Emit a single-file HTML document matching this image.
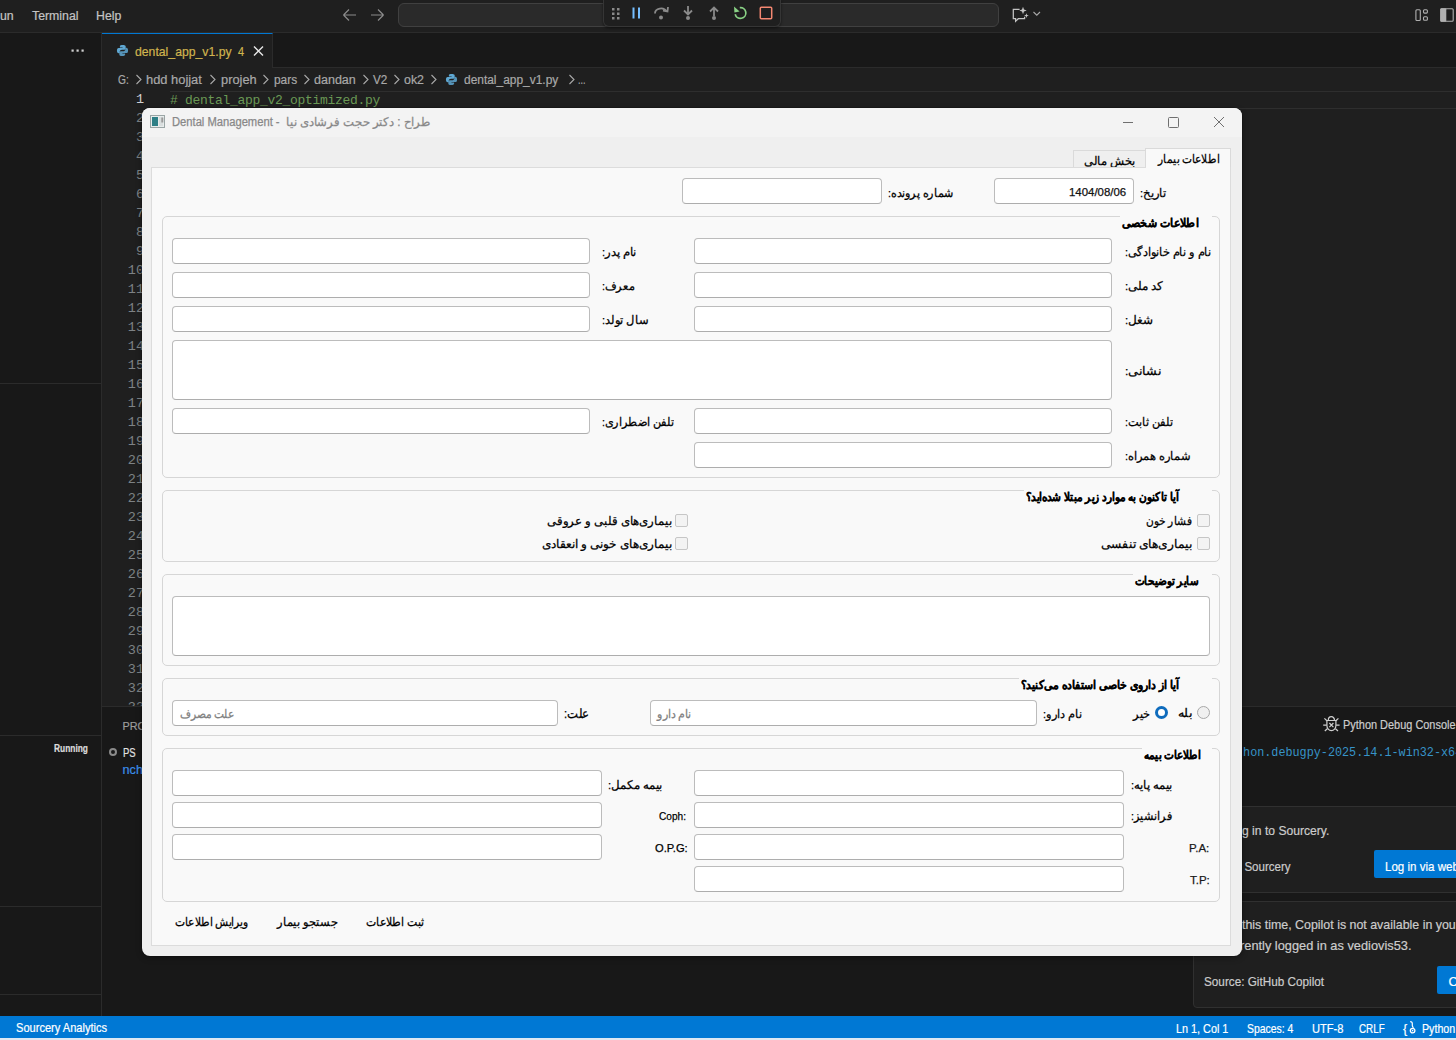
<!DOCTYPE html>
<html><head><meta charset="utf-8">
<style>
*{box-sizing:border-box;margin:0;padding:0}
html,body{width:1456px;height:1040px;overflow:hidden;background:#1f1f1f;font-family:"Liberation Sans",sans-serif}
.a{position:absolute}
.t{position:absolute;white-space:nowrap;line-height:1}
.ln{position:absolute;left:104px;width:40px;text-align:right;font-family:"Liberation Mono",monospace;font-size:13.5px;color:#6e7681;line-height:19px}
</style></head>
<body>
<div class="a" style="left:0px;top:0px;width:1456px;height:33px;background:#1f1f1f;border-bottom:1px solid #2b2b2b"></div>
<div id="V0" class="t" style="left:0px;top:9.34px;font-size:12.3px;line-height:14px;color:#c4c4c4;-webkit-text-stroke:0.2px #c4c4c4;transform-origin:0 50%;transform:scaleX(1.0000);">un</div>
<div id="V1" class="t" style="left:32px;top:9.34px;font-size:12.3px;line-height:14px;color:#c4c4c4;-webkit-text-stroke:0.2px #c4c4c4;transform-origin:0 50%;transform:scaleX(1.0000);">Terminal</div>
<div id="V2" class="t" style="left:96px;top:9.34px;font-size:12.3px;line-height:14px;color:#c4c4c4;-webkit-text-stroke:0.2px #c4c4c4;transform-origin:0 50%;transform:scaleX(1.0000);">Help</div>
<svg class="a" style="left:342px;top:7px" width="44" height="16" viewBox="0 0 44 16"><path d="M1.5 8H14M1.5 8L7 2.5M1.5 8L7 13.5" stroke="#8b8b8b" stroke-width="1.2" fill="none"/><path d="M41.5 8H29M41.5 8L36 2.5M41.5 8L36 13.5" stroke="#8b8b8b" stroke-width="1.2" fill="none"/></svg>
<div class="a" style="left:398px;top:3px;width:601px;height:24px;background:#2a2a2a;border:1px solid #404040;border-radius:6px"></div>
<div class="a" style="left:603px;top:0px;width:178px;height:27px;background:#1f1f1f;border:1px solid #353535;border-top:none;border-radius:0 0 6px 6px;box-shadow:0 1px 3px rgba(0,0,0,.5)"></div>
<svg class="a" style="left:603px;top:0px" width="178" height="27" viewBox="0 0 178 27">
 <g fill="#8a8a8a"><rect x="9" y="8" width="2.5" height="2.5"/><rect x="14" y="8" width="2.5" height="2.5"/><rect x="9" y="12.5" width="2.5" height="2.5"/><rect x="14" y="12.5" width="2.5" height="2.5"/><rect x="9" y="17" width="2.5" height="2.5"/><rect x="14" y="17" width="2.5" height="2.5"/></g>
 <g fill="#75beff"><rect x="29.5" y="7.5" width="2" height="11"/><rect x="35" y="7.5" width="2" height="11"/></g>
 <path d="M52 13.5 a6 5 0 0 1 11.5 -2" stroke="#8a8a8a" stroke-width="1.8" fill="none"/><path d="M60 10.5 L64.5 11.5 L65 7" stroke="#8a8a8a" stroke-width="1.8" fill="none"/><circle cx="58" cy="17.5" r="2" fill="#8a8a8a"/>
 <path d="M85 6V14M81 10.5L85 14.5L89 10.5" stroke="#8a8a8a" stroke-width="1.8" fill="none"/><circle cx="85" cy="18" r="2" fill="#8a8a8a"/>
 <path d="M111 16V8M107 11.5L111 7.5L115 11.5" stroke="#8a8a8a" stroke-width="1.8" fill="none"/><circle cx="111" cy="18" r="2" fill="#8a8a8a"/>
 <path d="M136.8 7.6 A5.4 5.4 0 1 1 132.2 14.2" stroke="#89d185" stroke-width="1.7" fill="none"/><path d="M131 6.6 L131.4 12.4 L136.6 11.6 Z" fill="#89d185"/>
 <rect x="157.3" y="7.3" width="11.4" height="11.4" rx="1" stroke="#f48771" stroke-width="1.5" fill="none"/>
</svg>
<svg class="a" style="left:1011px;top:6px" width="32" height="18" viewBox="0 0 32 18"><path d="M8.6 3.3H2.3V12.7H4.6V15.2L7.3 12.7H13.6V10.8" stroke="#c4c4c4" stroke-width="1.25" fill="none"/><path d="M12 0.8 L13 3.5 L15.7 4.5 L13 5.5 L12 8.2 L11 5.5 L8.3 4.5 L11 3.5Z" fill="#c4c4c4"/><path d="M15.4 7.2 L16 9 L17.8 9.6 L16 10.2 L15.4 12 L14.8 10.2 L13 9.6 L14.8 9Z" fill="#c4c4c4"/><path d="M22.5 6L25.8 9.2L29 6" stroke="#a8a8a8" stroke-width="1.1" fill="none"/></svg>
<svg class="a" style="left:1412px;top:6px" width="44" height="18" viewBox="0 0 44 18"><g stroke="#b0b0b0" stroke-width="1.1" fill="none"><rect x="3.9" y="3.7" width="4.4" height="10.8" rx="1"/><rect x="11.5" y="3.7" width="3.9" height="3.4" rx="1"/><rect x="11.5" y="10.8" width="3.9" height="3.5" rx="1"/><rect x="28.8" y="2.7" width="12.4" height="12.6" rx="1"/></g><rect x="28.3" y="2.2" width="6" height="13.6" rx="1" fill="#b0b0b0"/></svg>
<div class="a" style="left:0px;top:33px;width:102px;height:983px;background:#181818;border-right:1px solid #2b2b2b"></div>
<div class="a" style="left:0px;top:383px;width:101px;height:1px;background:#2b2b2b"></div>
<div class="a" style="left:0px;top:735px;width:101px;height:1px;background:#2b2b2b"></div>
<div class="a" style="left:0px;top:906px;width:101px;height:1px;background:#2b2b2b"></div>
<div class="a" style="left:0px;top:994px;width:101px;height:1px;background:#2b2b2b"></div>
<svg class="a" style="left:70px;top:48px" width="16" height="6"><rect x="1.5" y="1.5" width="2.2" height="2.2" fill="#d0d0d0"/><rect x="6.5" y="1.5" width="2.2" height="2.2" fill="#d0d0d0"/><rect x="11.5" y="1.5" width="2.2" height="2.2" fill="#d0d0d0"/></svg>
<div id="V3" class="t" style="left:54px;top:741.19px;font-size:11px;line-height:14px;color:#dcdcdc;-webkit-text-stroke:0.2px #dcdcdc;font-weight:bold;transform-origin:0 50%;transform:scaleX(0.7609);">Running</div>
<div class="a" style="left:102px;top:33px;width:1354px;height:35px;background:#181818;border-bottom:1px solid #2b2b2b"></div>
<div class="a" style="left:102px;top:33px;width:171px;height:35px;background:#1f1f1f;border-top:1px solid #0078d4;border-right:1px solid #2b2b2b"></div>
<svg class="a" style="left:116px;top:44px" width="13" height="13" viewBox="0 0 14 14"><path d="M7 1C4 1 4.2 2.3 4.2 2.3V3.7H7.1V4.2H3C1.5 4.2 1 5.5 1 7.1S1.6 10 3 10H4V8.4C4 7 5.2 6.1 6.4 6.1H9C10.1 6.1 10.4 5.3 10.4 4.4V2.5C10.4 1.6 9.5 1 7 1Z" fill="#5fa8d3"/><path d="M7 13C10 13 9.8 11.7 9.8 11.7V10.3H6.9V9.8H11C12.5 9.8 13 8.5 13 6.9S12.4 4 11 4H10V5.6C10 7 8.8 7.9 7.6 7.9H5C3.9 7.9 3.6 8.7 3.6 9.6V11.5C3.6 12.4 4.5 13 7 13Z" fill="#5fa8d3" opacity=".85"/></svg>
<div id="V4" class="t" style="left:135px;top:45.16px;font-size:12.8px;line-height:14px;color:#d0b44e;-webkit-text-stroke:0.2px #d0b44e;transform-origin:0 50%;transform:scaleX(0.9559);">dental_app_v1.py</div>
<div id="V5" class="t" style="left:238px;top:45.16px;font-size:12.8px;line-height:14px;color:#d0b44e;-webkit-text-stroke:0.2px #d0b44e;transform-origin:0 50%;transform:scaleX(0.8571);">4</div>
<svg class="a" style="left:253px;top:46px" width="11" height="10" viewBox="0 0 11 10"><path d="M1 0.5L10 9.5M10 0.5L1 9.5" stroke="#e8e8e8" stroke-width="1.4"/></svg>
<div class="a" style="left:102px;top:68px;width:1354px;height:638px;background:#1f1f1f"></div>
<div id="V6" class="t" style="left:118px;top:73.27px;font-size:12.5px;line-height:14px;color:#a9a9a9;-webkit-text-stroke:0.2px #a9a9a9;transform-origin:0 50%;transform:scaleX(0.8143);">G:</div>
<div id="V7" class="t" style="left:146.2px;top:73.27px;font-size:12.5px;line-height:14px;color:#a9a9a9;-webkit-text-stroke:0.2px #a9a9a9;transform-origin:0 50%;transform:scaleX(1.0304);">hdd hojjat</div>
<div id="V8" class="t" style="left:220.7px;top:73.27px;font-size:12.5px;line-height:14px;color:#a9a9a9;-webkit-text-stroke:0.2px #a9a9a9;transform-origin:0 50%;transform:scaleX(1.0257);">projeh</div>
<div id="V9" class="t" style="left:274px;top:73.27px;font-size:12.5px;line-height:14px;color:#a9a9a9;-webkit-text-stroke:0.2px #a9a9a9;transform-origin:0 50%;transform:scaleX(0.9520);">pars</div>
<div id="V10" class="t" style="left:314.3px;top:73.27px;font-size:12.5px;line-height:14px;color:#a9a9a9;-webkit-text-stroke:0.2px #a9a9a9;transform-origin:0 50%;transform:scaleX(1.0024);">dandan</div>
<div id="V11" class="t" style="left:373px;top:73.27px;font-size:12.5px;line-height:14px;color:#a9a9a9;-webkit-text-stroke:0.2px #a9a9a9;transform-origin:0 50%;transform:scaleX(0.9375);">V2</div>
<div id="V12" class="t" style="left:404px;top:73.27px;font-size:12.5px;line-height:14px;color:#a9a9a9;-webkit-text-stroke:0.2px #a9a9a9;transform-origin:0 50%;transform:scaleX(0.9905);">ok2</div>
<div id="V13" class="t" style="left:464px;top:73.27px;font-size:12.5px;line-height:14px;color:#a9a9a9;-webkit-text-stroke:0.2px #a9a9a9;transform-origin:0 50%;transform:scaleX(0.9549);">dental_app_v1.py</div>
<div id="V14" class="t" style="left:578.4px;top:73.27px;font-size:12.5px;line-height:14px;color:#a9a9a9;-webkit-text-stroke:0.2px #a9a9a9;transform-origin:0 50%;transform:scaleX(0.7167);">...</div>
<svg class="a" style="left:134.5px;top:74px" width="8" height="11" viewBox="0 0 8 11"><path d="M1.5 1L6 5.5L1.5 10" stroke="#a9a9a9" stroke-width="1.1" fill="none"/></svg>
<svg class="a" style="left:208.7px;top:74px" width="8" height="11" viewBox="0 0 8 11"><path d="M1.5 1L6 5.5L1.5 10" stroke="#a9a9a9" stroke-width="1.1" fill="none"/></svg>
<svg class="a" style="left:262.0px;top:74px" width="8" height="11" viewBox="0 0 8 11"><path d="M1.5 1L6 5.5L1.5 10" stroke="#a9a9a9" stroke-width="1.1" fill="none"/></svg>
<svg class="a" style="left:302.6px;top:74px" width="8" height="11" viewBox="0 0 8 11"><path d="M1.5 1L6 5.5L1.5 10" stroke="#a9a9a9" stroke-width="1.1" fill="none"/></svg>
<svg class="a" style="left:362.0px;top:74px" width="8" height="11" viewBox="0 0 8 11"><path d="M1.5 1L6 5.5L1.5 10" stroke="#a9a9a9" stroke-width="1.1" fill="none"/></svg>
<svg class="a" style="left:392.6px;top:74px" width="8" height="11" viewBox="0 0 8 11"><path d="M1.5 1L6 5.5L1.5 10" stroke="#a9a9a9" stroke-width="1.1" fill="none"/></svg>
<svg class="a" style="left:430.0px;top:74px" width="8" height="11" viewBox="0 0 8 11"><path d="M1.5 1L6 5.5L1.5 10" stroke="#a9a9a9" stroke-width="1.1" fill="none"/></svg>
<svg class="a" style="left:567.6px;top:74px" width="8" height="11" viewBox="0 0 8 11"><path d="M1.5 1L6 5.5L1.5 10" stroke="#a9a9a9" stroke-width="1.1" fill="none"/></svg>
<svg class="a" style="left:445px;top:73px" width="13" height="13" viewBox="0 0 14 14"><path d="M7 1C4 1 4.2 2.3 4.2 2.3V3.7H7.1V4.2H3C1.5 4.2 1 5.5 1 7.1S1.6 10 3 10H4V8.4C4 7 5.2 6.1 6.4 6.1H9C10.1 6.1 10.4 5.3 10.4 4.4V2.5C10.4 1.6 9.5 1 7 1Z" fill="#5fa8d3"/><path d="M7 13C10 13 9.8 11.7 9.8 11.7V10.3H6.9V9.8H11C12.5 9.8 13 8.5 13 6.9S12.4 4 11 4H10V5.6C10 7 8.8 7.9 7.6 7.9H5C3.9 7.9 3.6 8.7 3.6 9.6V11.5C3.6 12.4 4.5 13 7 13Z" fill="#5fa8d3" opacity=".85"/></svg>
<div class="a" style="left:170px;top:91px;width:1286px;height:18px;border-top:1px solid #2e2e2e;border-bottom:1px solid #2e2e2e"></div>
<div class="t" style="left:170px;top:94px;font-family:'Liberation Mono',monospace;font-size:13px;letter-spacing:-0.3px;line-height:14px;color:#6a9955">#&nbsp;dental_app_v2_optimized.py</div>
<div class="ln" style="top:90.0px;color:#d0d0d0">1</div>
<div class="ln" style="top:109.0px;color:#7d8285">2</div>
<div class="ln" style="top:128.0px;color:#7d8285">3</div>
<div class="ln" style="top:147.0px;color:#7d8285">4</div>
<div class="ln" style="top:166.0px;color:#7d8285">5</div>
<div class="ln" style="top:185.0px;color:#7d8285">6</div>
<div class="ln" style="top:204.0px;color:#7d8285">7</div>
<div class="ln" style="top:223.0px;color:#7d8285">8</div>
<div class="ln" style="top:242.0px;color:#7d8285">9</div>
<div class="ln" style="top:261.0px;color:#7d8285">10</div>
<div class="ln" style="top:280.0px;color:#7d8285">11</div>
<div class="ln" style="top:299.0px;color:#7d8285">12</div>
<div class="ln" style="top:318.0px;color:#7d8285">13</div>
<div class="ln" style="top:337.0px;color:#7d8285">14</div>
<div class="ln" style="top:356.0px;color:#7d8285">15</div>
<div class="ln" style="top:375.0px;color:#7d8285">16</div>
<div class="ln" style="top:394.0px;color:#7d8285">17</div>
<div class="ln" style="top:413.0px;color:#7d8285">18</div>
<div class="ln" style="top:432.0px;color:#7d8285">19</div>
<div class="ln" style="top:451.0px;color:#7d8285">20</div>
<div class="ln" style="top:470.0px;color:#7d8285">21</div>
<div class="ln" style="top:489.0px;color:#7d8285">22</div>
<div class="ln" style="top:508.0px;color:#7d8285">23</div>
<div class="ln" style="top:527.0px;color:#7d8285">24</div>
<div class="ln" style="top:546.0px;color:#7d8285">25</div>
<div class="ln" style="top:565.0px;color:#7d8285">26</div>
<div class="ln" style="top:584.0px;color:#7d8285">27</div>
<div class="ln" style="top:603.0px;color:#7d8285">28</div>
<div class="ln" style="top:622.0px;color:#7d8285">29</div>
<div class="ln" style="top:641.0px;color:#7d8285">30</div>
<div class="ln" style="top:660.0px;color:#7d8285">31</div>
<div class="ln" style="top:679.0px;color:#7d8285">32</div>
<div class="ln" style="top:698.0px;color:#7d8285">33</div>
<div class="a" style="left:102px;top:706px;width:1354px;height:310px;background:#181818;border-top:1px solid #2b2b2b"></div>
<div id="V15" class="t" style="left:122.6px;top:718.76px;font-size:10.8px;line-height:14px;color:#9d9d9d;-webkit-text-stroke:0.2px #9d9d9d;transform-origin:0 50%;transform:scaleX(1.0000);">PROBLEMS</div>
<div class="a" style="left:108.6px;top:747.8px;width:8.2px;height:8.2px;border:2px solid #8a8a8a;border-radius:50%"></div>
<div id="V16" class="t" style="left:122.6px;top:746.26px;font-size:12.8px;line-height:14px;color:#e0e0e0;-webkit-text-stroke:0.2px #e0e0e0;transform-origin:0 50%;transform:scaleX(0.7444);-webkit-text-stroke:0.2px #e0e0e0;">PS</div>
<div id="V17" class="t" style="left:122.6px;top:763.13px;font-size:12.6px;line-height:14px;color:#3b8eea;-webkit-text-stroke:0.2px #3b8eea;transform-origin:0 50%;transform:scaleX(1.0000);">nchers</div>
<svg class="a" style="left:1322px;top:715px" width="20" height="18" viewBox="0 0 20 18"><g stroke="#d0d0d0" stroke-width="1.2" fill="none"><path d="M6.3 5.3A3.1 3.6 0 0 1 12.5 5.3"/><path d="M4.9 5.5H13.9V10.5A4.5 5.2 0 0 1 4.9 10.5Z"/><path d="M2.4 3.4L4.9 5.8M1.2 10.2H4.7M2.8 16L5.3 13.8M16.4 3.4L13.9 5.8M17.6 10.2H14.1M16 16L13.5 13.8M7.4 8L11.4 12.2M11.4 8L7.4 12.2"/></g></svg>
<div id="V18" class="t" style="left:1343px;top:718.24px;font-size:12.3px;line-height:14px;color:#cccccc;-webkit-text-stroke:0.2px #cccccc;transform-origin:0 50%;transform:scaleX(0.8898);">Python Debug Console</div>
<div id="V19" class="t" style="left:1236.1px;top:746.34px;font-size:12px;line-height:14px;color:#3794c8;font-family:'Liberation Mono',monospace;transform-origin:0 50%;transform:scaleX(0.9817);">thon.debugpy-2025.14.1-win32-x64</div>
<div class="a" style="left:1193px;top:806px;width:277px;height:87px;background:#1f1f1f;border:1px solid #303030;border-radius:4px"></div>
<div id="V20" class="t" style="left:1242px;top:823.96px;font-size:12.8px;line-height:14px;color:#cccccc;-webkit-text-stroke:0.2px #cccccc;transform-origin:0 50%;transform:scaleX(0.9474);">g in to Sourcery.</div>
<div id="V21" class="t" style="left:1238px;top:859.56px;font-size:12.8px;line-height:14px;color:#cccccc;-webkit-text-stroke:0.2px #cccccc;transform-origin:0 50%;transform:scaleX(0.9000);">: Sourcery</div>
<div class="a" style="left:1374px;top:850px;width:96px;height:28px;background:#0078d4;border-radius:2px"></div>
<div id="V22" class="t" style="left:1385px;top:859.56px;font-size:12.8px;line-height:14px;color:#ffffff;-webkit-text-stroke:0.2px #ffffff;transform-origin:0 50%;transform:scaleX(0.9036);">Log in via web</div>
<div class="a" style="left:1193px;top:901px;width:277px;height:107px;background:#1f1f1f;border:1px solid #303030;border-radius:4px"></div>
<div id="V23" class="t" style="left:1242px;top:918.16px;font-size:12.8px;line-height:14px;color:#cccccc;-webkit-text-stroke:0.2px #cccccc;transform-origin:0 50%;transform:scaleX(0.9693);">this time, Copilot is not available in you</div>
<div id="V24" class="t" style="left:1240px;top:939.26px;font-size:12.8px;line-height:14px;color:#cccccc;-webkit-text-stroke:0.2px #cccccc;transform-origin:0 50%;transform:scaleX(1.0000);">rently logged in as vediovis53.</div>
<div id="V25" class="t" style="left:1204px;top:974.76px;font-size:12.8px;line-height:14px;color:#cccccc;-webkit-text-stroke:0.2px #cccccc;transform-origin:0 50%;transform:scaleX(0.9173);">Source: GitHub Copilot</div>
<div class="a" style="left:1437px;top:966px;width:33px;height:28px;background:#0078d4;border-radius:2px"></div>
<div id="V26" class="t" style="left:1448.5px;top:974.76px;font-size:12.8px;line-height:14px;color:#ffffff;-webkit-text-stroke:0.2px #ffffff;transform-origin:0 50%;transform:scaleX(1.0000);">Cancel</div>
<div class="a" style="left:0px;top:1016px;width:1456px;height:24px;background:#0078d4;border-bottom:2px solid #dde8f3"></div>
<div id="V27" class="t" style="left:16.3px;top:1021.33px;font-size:12.6px;line-height:14px;color:#ffffff;-webkit-text-stroke:0.2px #ffffff;transform-origin:0 50%;transform:scaleX(0.8798);">Sourcery Analytics</div>
<div id="V28" class="t" style="left:1175.8px;top:1021.93px;font-size:12.6px;line-height:14px;color:#ffffff;-webkit-text-stroke:0.2px #ffffff;transform-origin:0 50%;transform:scaleX(0.8603);">Ln 1, Col 1</div>
<div id="V29" class="t" style="left:1246.7px;top:1021.93px;font-size:12.6px;line-height:14px;color:#ffffff;-webkit-text-stroke:0.2px #ffffff;transform-origin:0 50%;transform:scaleX(0.8288);">Spaces: 4</div>
<div id="V30" class="t" style="left:1311.5px;top:1021.93px;font-size:12.6px;line-height:14px;color:#ffffff;-webkit-text-stroke:0.2px #ffffff;transform-origin:0 50%;transform:scaleX(0.8833);">UTF-8</div>
<div id="V31" class="t" style="left:1359px;top:1021.93px;font-size:12.6px;line-height:14px;color:#ffffff;-webkit-text-stroke:0.2px #ffffff;transform-origin:0 50%;transform:scaleX(0.7818);">CRLF</div>
<div id="V32" class="t" style="left:1403px;top:1021.93px;font-size:12.6px;line-height:14px;color:#ffffff;-webkit-text-stroke:0.2px #ffffff;transform-origin:0 50%;transform:scaleX(1.0000);">{</div>
<svg class="a" style="left:1408px;top:1020px" width="10" height="15" viewBox="0 0 10 15"><path d="M2.2 1.6Q4.3 1.6 4.3 3.6V5.6Q4.3 7.2 5.6 7.6" stroke="#fff" stroke-width="1.2" fill="none"/><circle cx="4.6" cy="10.6" r="2.3" stroke="#fff" stroke-width="1.3" fill="none"/><circle cx="4.6" cy="10.6" r="0.8" fill="#fff"/></svg>
<div id="V33" class="t" style="left:1422.3px;top:1021.93px;font-size:12.6px;line-height:14px;color:#ffffff;-webkit-text-stroke:0.2px #ffffff;transform-origin:0 50%;transform:scaleX(0.8463);">Python</div>
<!-- dialog -->
<div class="a" style="left:142px;top:108px;width:1100px;height:848px;background:#efefef;border-radius:8px;box-shadow:0 0 0 1px rgba(0,0,0,.15),0 2px 6px rgba(0,0,0,.3)"></div>
<div class="a" style="left:142px;top:108px;width:1100px;height:29px;background:#f3f3f3;border-radius:8px 8px 0 0"></div>
<svg class="a" style="left:150px;top:115px" width="16" height="14" viewBox="0 0 16 14"><rect x="0.5" y="0.5" width="14" height="12" fill="#e8ecec" stroke="#9aa5a5"/><rect x="2" y="2" width="6" height="9" fill="#2e7f86"/><rect x="9" y="2" width="4" height="9" fill="#d9dede"/><rect x="11.3" y="2.5" width="2" height="5" fill="#9a9a9a"/></svg>
<div id="L0" class="t" style="left:172px;top:115px;font-size:12px;line-height:14px;color:#888;-webkit-text-stroke:0.25px #888;transform-origin:0 50%;transform:scaleX(0.9322)">Dental Management -</div>
<div id="L1" class="t" dir="rtl" style="left:286px;top:115px;font-size:12px;line-height:14px;color:#888;-webkit-text-stroke:0.25px #888;transform-origin:0 50%;transform:scaleX(0.9728)">طراح : دکتر حجت فرشادی نیا</div>
<svg class="a" style="left:1118px;top:112px" width="112" height="20" viewBox="0 0 112 20"><path d="M5 10.5H15" stroke="#6f6f6f" stroke-width="1"/><rect x="50.5" y="5.5" width="10" height="10" rx="1" stroke="#6f6f6f" stroke-width="1" fill="none"/><path d="M96 5L106 15M106 5L96 15" stroke="#6f6f6f" stroke-width="1"/></svg>
<div class="a" style="left:1073px;top:150px;width:73px;height:18px;background:#efefef;border:1px solid #dadada;border-bottom:none"></div>
<div class="a" style="left:1145px;top:148px;width:86px;height:20px;background:#f9f9f9;border:1px solid #dadada;border-bottom:none"></div>
<div id="L2" class="t" dir="rtl" style="left:1084px;top:154px;font-size:11.5px;line-height:14px;color:#000;-webkit-text-stroke:0.25px #000;transform-origin:0 50%;transform:scaleX(0.9623)">بخش مالی</div>
<div id="L3" class="t" dir="rtl" style="left:1158px;top:152px;font-size:11.5px;line-height:14px;color:#000;-webkit-text-stroke:0.25px #000;transform-origin:0 50%;transform:scaleX(0.8841)">اطلاعات بیمار</div>
<div class="a" style="left:151px;top:167px;width:1080px;height:779px;background:#f9f9f9;border:1px solid #dcdcdc"></div>
<div class="a" style="left:1146px;top:166px;width:84px;height:3px;background:#f9f9f9"></div>
<div id="L4" class="t" dir="rtl" style="left:1140px;top:186px;font-size:11.5px;line-height:14px;color:#000;-webkit-text-stroke:0.25px #000;transform-origin:0 50%;transform:scaleX(0.9630)">تاریخ:</div>
<div class="a" style="left:994px;top:178px;width:140px;height:26px;background:#fff;border:1px solid #bcbcbc;border-bottom-color:#adadad;border-radius:4px"></div>
<div id="L5" class="t" style="left:1069px;top:185px;font-size:11px;line-height:14px;color:#111;-webkit-text-stroke:0.25px #111;transform-origin:0 50%;transform:scaleX(1.0370)">1404/08/06</div>
<div id="L6" class="t" dir="rtl" style="left:888px;top:186px;font-size:11.5px;line-height:14px;color:#000;-webkit-text-stroke:0.25px #000;transform-origin:0 50%;transform:scaleX(0.9286)">شماره پرونده:</div>
<div class="a" style="left:682px;top:178px;width:200px;height:26px;background:#fff;border:1px solid #bcbcbc;border-bottom-color:#adadad;border-radius:4px"></div>
<div class="a" style="left:162px;top:216px;width:1058px;height:262px;border:1px solid #d6d6d6;border-radius:5px"></div>
<div class="a" style="left:1120px;top:215px;width:92px;height:3px;background:#f9f9f9"></div>
<div id="L7" class="t" dir="rtl" style="left:1122px;top:216px;font-size:11.5px;line-height:14px;color:#000;-webkit-text-stroke:0.25px #000;font-weight:bold;transform-origin:0 50%;transform:scaleX(0.9175)">اطلاعات شخصی</div>
<div class="a" style="left:694px;top:238px;width:418px;height:26px;background:#fff;border:1px solid #bcbcbc;border-bottom-color:#adadad;border-radius:4px"></div>
<div id="L8" class="t" dir="rtl" style="left:1125px;top:245px;font-size:11.5px;line-height:14px;color:#000;-webkit-text-stroke:0.25px #000;transform-origin:0 50%;transform:scaleX(0.9444)">نام و نام خانوادگی:</div>
<div class="a" style="left:172px;top:238px;width:418px;height:26px;background:#fff;border:1px solid #bcbcbc;border-bottom-color:#adadad;border-radius:4px"></div>
<div id="L9" class="t" dir="rtl" style="left:602px;top:245px;font-size:11.5px;line-height:14px;color:#000;-webkit-text-stroke:0.25px #000;transform-origin:0 50%;transform:scaleX(0.9714)">نام پدر:</div>
<div class="a" style="left:694px;top:272px;width:418px;height:26px;background:#fff;border:1px solid #bcbcbc;border-bottom-color:#adadad;border-radius:4px"></div>
<div id="L10" class="t" dir="rtl" style="left:1125px;top:279px;font-size:11.5px;line-height:14px;color:#000;-webkit-text-stroke:0.25px #000;transform-origin:0 50%;transform:scaleX(1.0000)">کد ملی:</div>
<div class="a" style="left:172px;top:272px;width:418px;height:26px;background:#fff;border:1px solid #bcbcbc;border-bottom-color:#adadad;border-radius:4px"></div>
<div id="L11" class="t" dir="rtl" style="left:602px;top:279px;font-size:11.5px;line-height:14px;color:#000;-webkit-text-stroke:0.25px #000;transform-origin:0 50%;transform:scaleX(0.9412)">معرف:</div>
<div class="a" style="left:694px;top:306px;width:418px;height:26px;background:#fff;border:1px solid #bcbcbc;border-bottom-color:#adadad;border-radius:4px"></div>
<div id="L12" class="t" dir="rtl" style="left:1125px;top:313px;font-size:11.5px;line-height:14px;color:#000;-webkit-text-stroke:0.25px #000;transform-origin:0 50%;transform:scaleX(1.0000)">شغل:</div>
<div class="a" style="left:172px;top:306px;width:418px;height:26px;background:#fff;border:1px solid #bcbcbc;border-bottom-color:#adadad;border-radius:4px"></div>
<div id="L13" class="t" dir="rtl" style="left:602px;top:313px;font-size:11.5px;line-height:14px;color:#000;-webkit-text-stroke:0.25px #000;transform-origin:0 50%;transform:scaleX(0.9583)">سال تولد:</div>
<div class="a" style="left:172px;top:340px;width:940px;height:60px;background:#fff;border:1px solid #bcbcbc;border-bottom-color:#adadad;border-radius:4px"></div>
<div id="L14" class="t" dir="rtl" style="left:1125px;top:364px;font-size:11.5px;line-height:14px;color:#000;-webkit-text-stroke:0.25px #000;transform-origin:0 50%;transform:scaleX(1.0588)">نشانی:</div>
<div class="a" style="left:694px;top:408px;width:418px;height:26px;background:#fff;border:1px solid #bcbcbc;border-bottom-color:#adadad;border-radius:4px"></div>
<div id="L15" class="t" dir="rtl" style="left:1125px;top:415px;font-size:11.5px;line-height:14px;color:#000;-webkit-text-stroke:0.25px #000;transform-origin:0 50%;transform:scaleX(0.9400)">تلفن ثابت:</div>
<div class="a" style="left:172px;top:408px;width:418px;height:26px;background:#fff;border:1px solid #bcbcbc;border-bottom-color:#adadad;border-radius:4px"></div>
<div id="L16" class="t" dir="rtl" style="left:602px;top:415px;font-size:11.5px;line-height:14px;color:#000;-webkit-text-stroke:0.25px #000;transform-origin:0 50%;transform:scaleX(0.9342)">تلفن اضطراری:</div>
<div class="a" style="left:694px;top:442px;width:418px;height:26px;background:#fff;border:1px solid #bcbcbc;border-bottom-color:#adadad;border-radius:4px"></div>
<div id="L17" class="t" dir="rtl" style="left:1125px;top:449px;font-size:11.5px;line-height:14px;color:#000;-webkit-text-stroke:0.25px #000;transform-origin:0 50%;transform:scaleX(0.9559)">شماره همراه:</div>
<div class="a" style="left:162px;top:490px;width:1058px;height:72px;border:1px solid #d6d6d6;border-radius:5px"></div>
<div class="a" style="left:1024px;top:489px;width:188px;height:3px;background:#f9f9f9"></div>
<div id="L18" class="t" dir="rtl" style="left:1026px;top:490px;font-size:11.5px;line-height:14px;color:#000;-webkit-text-stroke:0.25px #000;font-weight:bold;transform-origin:0 50%;transform:scaleX(0.8810)">آیا تاکنون به موارد زیر مبتلا شده‌اید؟</div>
<div class="a" style="left:1197px;top:514px;width:13px;height:13px;background:#f3f3f3;border:1px solid #c6c6c6;border-radius:2px"></div>
<div id="L19" class="t" dir="rtl" style="left:1146px;top:514px;font-size:11.5px;line-height:14px;color:#000;-webkit-text-stroke:0.25px #000;transform-origin:0 50%;transform:scaleX(0.8846)">فشار خون</div>
<div class="a" style="left:1197px;top:537px;width:13px;height:13px;background:#f3f3f3;border:1px solid #c6c6c6;border-radius:2px"></div>
<div id="L20" class="t" dir="rtl" style="left:1101px;top:537px;font-size:11.5px;line-height:14px;color:#000;-webkit-text-stroke:0.25px #000;transform-origin:0 50%;transform:scaleX(1.0225)">بیماری‌های تنفسی</div>
<div class="a" style="left:675px;top:514px;width:13px;height:13px;background:#f3f3f3;border:1px solid #c6c6c6;border-radius:2px"></div>
<div id="L21" class="t" dir="rtl" style="left:547px;top:514px;font-size:11.5px;line-height:14px;color:#000;-webkit-text-stroke:0.25px #000;transform-origin:0 50%;transform:scaleX(0.9764)">بیماری‌های قلبی و عروقی</div>
<div class="a" style="left:675px;top:537px;width:13px;height:13px;background:#f3f3f3;border:1px solid #c6c6c6;border-radius:2px"></div>
<div id="L22" class="t" dir="rtl" style="left:542px;top:537px;font-size:11.5px;line-height:14px;color:#000;-webkit-text-stroke:0.25px #000;transform-origin:0 50%;transform:scaleX(1.0000)">بیماری‌های خونی و انعقادی</div>
<div class="a" style="left:162px;top:574px;width:1058px;height:92px;border:1px solid #d6d6d6;border-radius:5px"></div>
<div class="a" style="left:1133px;top:573px;width:79px;height:3px;background:#f9f9f9"></div>
<div id="L23" class="t" dir="rtl" style="left:1135px;top:574px;font-size:11.5px;line-height:14px;color:#000;-webkit-text-stroke:0.25px #000;font-weight:bold;transform-origin:0 50%;transform:scaleX(0.8636)">سایر توضیحات</div>
<div class="a" style="left:172px;top:596px;width:1038px;height:60px;background:#fff;border:1px solid #bcbcbc;border-bottom-color:#adadad;border-radius:4px"></div>
<div class="a" style="left:162px;top:678px;width:1058px;height:58px;border:1px solid #d6d6d6;border-radius:5px"></div>
<div class="a" style="left:1019px;top:677px;width:193px;height:3px;background:#f9f9f9"></div>
<div id="L24" class="t" dir="rtl" style="left:1021px;top:678px;font-size:11.5px;line-height:14px;color:#000;-webkit-text-stroke:0.25px #000;font-weight:bold;transform-origin:0 50%;transform:scaleX(0.9005)">آیا از داروی خاصی استفاده می‌کنید؟</div>
<div class="a" style="left:1197px;top:706px;width:13px;height:13px;background:#f0f0f0;border:1px solid #a8a8a8;border-radius:50%"></div>
<div id="L25" class="t" dir="rtl" style="left:1178px;top:706px;font-size:11.5px;line-height:14px;color:#000;-webkit-text-stroke:0.25px #000;transform-origin:0 50%;transform:scaleX(1.0769)">بله</div>
<div class="a" style="left:1155px;top:706px;width:13px;height:13px;background:#fff;border:3.5px solid #0f6cbd;border-radius:50%"></div>
<div id="L26" class="t" dir="rtl" style="left:1133px;top:707px;font-size:11.5px;line-height:14px;color:#000;-webkit-text-stroke:0.25px #000;transform-origin:0 50%;transform:scaleX(0.9444)">خیر</div>
<div class="a" style="left:650px;top:700px;width:387px;height:26px;background:#fff;border:1px solid #bcbcbc;border-bottom-color:#adadad;border-radius:4px"></div>
<div id="L27" class="t" dir="rtl" style="left:657px;top:707.0px;font-size:11.5px;line-height:14px;color:#808080;-webkit-text-stroke:0.25px #808080;transform-origin:0 50%;transform:scaleX(0.9189)">نام دارو</div>
<div id="L28" class="t" dir="rtl" style="left:1043px;top:707px;font-size:11.5px;line-height:14px;color:#000;-webkit-text-stroke:0.25px #000;transform-origin:0 50%;transform:scaleX(0.9500)">نام دارو:</div>
<div class="a" style="left:172px;top:700px;width:386px;height:26px;background:#fff;border:1px solid #bcbcbc;border-bottom-color:#adadad;border-radius:4px"></div>
<div id="L29" class="t" dir="rtl" style="left:180px;top:707.0px;font-size:11.5px;line-height:14px;color:#808080;-webkit-text-stroke:0.25px #808080;transform-origin:0 50%;transform:scaleX(0.8852)">علت مصرف</div>
<div id="L30" class="t" dir="rtl" style="left:564px;top:707px;font-size:12.5px;line-height:14px;color:#000;-webkit-text-stroke:0.25px #000;transform-origin:0 50%;transform:scaleX(0.8966)">علت:</div>
<div class="a" style="left:162px;top:748px;width:1058px;height:154px;border:1px solid #d6d6d6;border-radius:5px"></div>
<div class="a" style="left:1142px;top:747px;width:70px;height:3px;background:#f9f9f9"></div>
<div id="L31" class="t" dir="rtl" style="left:1144px;top:748px;font-size:11.5px;line-height:14px;color:#000;-webkit-text-stroke:0.25px #000;font-weight:bold;transform-origin:0 50%;transform:scaleX(0.8701)">اطلاعات بیمه</div>
<div class="a" style="left:694px;top:770px;width:430px;height:26px;background:#fff;border:1px solid #bcbcbc;border-bottom-color:#adadad;border-radius:4px"></div>
<div class="a" style="left:694px;top:802px;width:430px;height:26px;background:#fff;border:1px solid #bcbcbc;border-bottom-color:#adadad;border-radius:4px"></div>
<div class="a" style="left:694px;top:834px;width:430px;height:26px;background:#fff;border:1px solid #bcbcbc;border-bottom-color:#adadad;border-radius:4px"></div>
<div class="a" style="left:694px;top:866px;width:430px;height:26px;background:#fff;border:1px solid #bcbcbc;border-bottom-color:#adadad;border-radius:4px"></div>
<div class="a" style="left:172px;top:770px;width:430px;height:26px;background:#fff;border:1px solid #bcbcbc;border-bottom-color:#adadad;border-radius:4px"></div>
<div class="a" style="left:172px;top:802px;width:430px;height:26px;background:#fff;border:1px solid #bcbcbc;border-bottom-color:#adadad;border-radius:4px"></div>
<div class="a" style="left:172px;top:834px;width:430px;height:26px;background:#fff;border:1px solid #bcbcbc;border-bottom-color:#adadad;border-radius:4px"></div>
<div id="L32" class="t" dir="rtl" style="left:1131px;top:778px;font-size:11.5px;line-height:14px;color:#000;-webkit-text-stroke:0.25px #000;transform-origin:0 50%;transform:scaleX(0.9762)">بیمه پایه:</div>
<div id="L33" class="t" dir="rtl" style="left:1131px;top:809px;font-size:11.5px;line-height:14px;color:#000;-webkit-text-stroke:0.25px #000;transform-origin:0 50%;transform:scaleX(0.9318)">فرانشیز:</div>
<div id="L34" class="t" style="left:1189px;top:841px;font-size:11.5px;line-height:14px;color:#1a1a1a;-webkit-text-stroke:0.25px #1a1a1a;transform-origin:0 50%;transform:scaleX(1.0000)">P.A:</div>
<div id="L35" class="t" style="left:1190px;top:873px;font-size:11.5px;line-height:14px;color:#1a1a1a;-webkit-text-stroke:0.25px #1a1a1a;transform-origin:0 50%;transform:scaleX(1.0000)">T.P:</div>
<div id="L36" class="t" dir="rtl" style="left:608px;top:778px;font-size:11.5px;line-height:14px;color:#000;-webkit-text-stroke:0.25px #000;transform-origin:0 50%;transform:scaleX(0.9818)">بیمه مکمل:</div>
<div id="L37" class="t" style="left:659px;top:809px;font-size:11.5px;line-height:14px;color:#000;-webkit-text-stroke:0.25px #000;transform-origin:0 50%;transform:scaleX(0.8788)">Coph:</div>
<div id="L38" class="t" style="left:655px;top:841px;font-size:11.5px;line-height:14px;color:#000;-webkit-text-stroke:0.25px #000;transform-origin:0 50%;transform:scaleX(0.9706)">O.P.G:</div>
<div id="L39" class="t" dir="rtl" style="left:175px;top:915px;font-size:11.5px;line-height:14px;color:#000;-webkit-text-stroke:0.25px #000;transform-origin:0 50%;transform:scaleX(0.8902)">ویرایش اطلاعات</div>
<div id="L40" class="t" dir="rtl" style="left:277px;top:915px;font-size:11.5px;line-height:14px;color:#000;-webkit-text-stroke:0.25px #000;transform-origin:0 50%;transform:scaleX(0.9524)">جستجو بیمار</div>
<div id="L41" class="t" dir="rtl" style="left:366px;top:915px;font-size:11.5px;line-height:14px;color:#000;-webkit-text-stroke:0.25px #000;transform-origin:0 50%;transform:scaleX(0.9062)">ثبت اطلاعات</div>
</body></html>
